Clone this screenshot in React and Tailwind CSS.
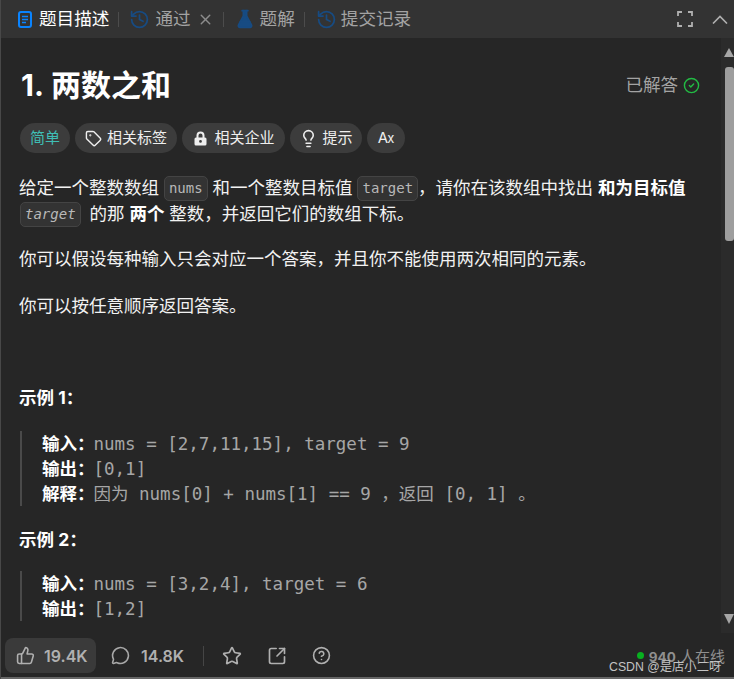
import React from "react";
import { ThumbsUp, MessageCircle, Star, SquareArrowOutUpRight, CircleHelp, Tag, Lightbulb, X, History, FlaskConical, CircleCheck } from "lucide-react";

const SANS = "font-['Inter','Noto_Sans_CJK_SC',sans-serif]";

function Sep() {
  return <span className="w-px h-[15px] bg-[#4c4c4c] mx-[9px]" />;
}

function Pill({ children, className = "" }) {
  return (
    <span className={`h-[30px] rounded-full bg-[#3c3c3c] flex items-center justify-center text-[15px] ${className}`}>
      {children}
    </span>
  );
}

function Code({ children, italic, className = "" }) {
  return (
    <code className={`inline-block h-[25px] leading-[22px] rounded-[5px] border border-[#444444] bg-[#333333] px-[4px] text-[14px] text-[#b8b8b8] font-['DejaVu_Sans_Mono',monospace] align-[1px] ${italic ? "italic" : ""} ${className}`}>
      {children}
    </code>
  );
}

function Mono({ children }) {
  return <span className="-ml-px font-['DejaVu_Sans_Mono','Noto_Sans_CJK_SC',monospace] text-[#a6a6a6]">{children}</span>;
}

function Label({ children }) {
  return <strong className="font-bold text-white text-[17.5px]">{children}</strong>;
}

export default function App() {
  return (
    <div className={`relative w-[734px] h-[679px] overflow-hidden bg-[#262626] border-l border-[#484848] flex flex-col ${SANS}`}>
      {/* tab bar */}
      <div className="h-[38px] shrink-0 bg-[#333333] flex items-center pl-[17px] pr-[6px] text-[17.6px]">
        <svg width="14" height="17" viewBox="0 0 14 17" fill="none" stroke="#0a84ff" strokeWidth="2">
          <rect x="1" y="1" width="12" height="15" rx="2" />
          <path d="M4 5.5H10M4 8.5H10M4 11.5H8" strokeWidth="1.5" />
        </svg>
        <span className="ml-[7px] text-white">题目描述</span>
        <Sep />
        <History size={21} className="ml-[1px] text-[#174b82]" />
        <span className="ml-[5px] text-[#a3a3a3]">通过</span>
        <X size={17} className="ml-[6px] text-[#8c8c8c]" />
        <Sep />
        <FlaskConical size={20} fill="#174b82" className="ml-[2px] text-[#174b82]" />
        <span className="ml-[5px] text-[#a3a3a3]">题解</span>
        <Sep />
        <History size={21} className="ml-[2px] text-[#174b82]" />
        <span className="ml-[4px] text-[#a3a3a3]">提交记录</span>
        <svg className="ml-auto" width="16" height="16" viewBox="0 0 16 16" fill="none" stroke="#b0b0b0" strokeWidth="1.8">
          <path d="M1 5V1H5M11 1H15V5M15 11V15H11M5 15H1V11" />
        </svg>
        <svg className="ml-[19px]" width="16" height="9" viewBox="0 0 16 9" fill="none" stroke="#b0b0b0" strokeWidth="1.6">
          <path d="M1 8.5L8 1.5L15 8.5" />
        </svg>
      </div>

      <div className="flex-1 flex min-h-0">
        {/* content */}
        <div className="flex-1 min-w-0 pl-[18px] pr-[20px] overflow-hidden">
          <div className="flex items-center justify-between mt-[28px] h-[38px]">
            <h1 className="text-[30px] font-bold text-white pl-[2px] leading-none">1.<span className="ml-[7px]">两数之和</span></h1>
            <span className="flex items-center text-[17.5px] text-[#a3a3a3] mr-[1px]">
              已解答
              <CircleCheck size={17} strokeWidth={2} className="ml-[5px] text-[#22bb44]" />
            </span>
          </div>

          <div className="flex gap-[5px] mt-[19px] ml-px text-[#eeeeee]">
            <Pill className="w-[50px] text-[#3fbfb5]">简单</Pill>
            <Pill className="w-[102px] gap-[5px]"><Tag size={17} />相关标签</Pill>
            <Pill className="w-[103px] gap-[7px] pl-[2px]">
              <svg width="13" height="15" viewBox="0 0 13 15">
                <path d="M3.5 7V4.5a3 3 0 0 1 6 0V7" fill="none" stroke="#eeeeee" strokeWidth="2" />
                <path fillRule="evenodd" d="M2 6.5H11a1.5 1.5 0 0 1 1.5 1.5V13a1.5 1.5 0 0 1-1.5 1.5H2A1.5 1.5 0 0 1 .5 13V8A1.5 1.5 0 0 1 2 6.5ZM6.5 9a1.4 1.4 0 1 0 0 2.8a1.4 1.4 0 0 0 0-2.8Z" fill="#eeeeee" />
              </svg>
              相关企业
            </Pill>
            <Pill className="w-[72px] gap-[4px]"><Lightbulb size={19} />提示</Pill>
            <Pill className="w-[38px] text-[14px]"><span>A</span><span className="text-[13px] -ml-[1px] mt-[1px]">x</span></Pill>
          </div>

          <div className="mt-[22px] text-[17.5px] leading-[26px] text-[#f2f2f2]">
            <p>
              给定一个整数数组 <Code>nums</Code> 和一个整数目标值 <Code>target</Code>，请你在该数组中找出 <strong className="font-bold text-white">和为目标值</strong>
              <br />
              <Code italic className="mr-[4px] ml-px">target</Code> 的那 <strong className="font-bold text-white">两个</strong> 整数，并返回它们的数组下标。
            </p>
            <p className="mt-[19px]">你可以假设每种输入只会对应一个答案，并且你不能使用两次相同的元素。</p>
            <p className="mt-[21px]">你可以按任意顺序返回答案。</p>
            <p className="mt-[66px]"><Label>示例 1：</Label></p>

            <blockquote className="mt-[20px] border-l-2 border-[#4a4a4a] pl-[20px] ml-[1px] leading-[25px]">
              <div className="h-[25px]"><Label>输入：</Label><Mono>nums = [2,7,11,15], target = 9</Mono></div>
              <div className="h-[25px]"><Label>输出：</Label><Mono>[0,1]</Mono></div>
              <div className="h-[25px]"><Label>解释：</Label><Mono>因为 nums[0] + nums[1] == 9 ，返回 [0, 1] 。</Mono></div>
            </blockquote>

            <p className="mt-[21px]"><Label>示例 2：</Label></p>
            <blockquote className="mt-[18px] border-l-2 border-[#4a4a4a] pl-[20px] ml-[1px] leading-[25px]">
              <div className="h-[25px]"><Label>输入：</Label><Mono>nums = [3,2,4], target = 6</Mono></div>
              <div className="h-[25px]"><Label>输出：</Label><Mono>[1,2]</Mono></div>
            </blockquote>
          </div>
        </div>

        {/* scrollbar */}
        <div className="w-[13px] shrink-0 bg-[#2b2b2b] flex flex-col items-end justify-between pt-[10px] pb-[9px]">
          <div className="flex flex-col items-end w-full">
            <svg width="10" height="9" viewBox="0 0 10 9"><path d="M5 0 L10 9 L0 9 Z" fill="#a6a6a6" /></svg>
            <div className="w-[9px] h-[174px] mt-[10px] rounded-[3px] bg-[#9e9e9e]" />
          </div>
          <svg width="10" height="10" viewBox="0 0 10 10"><path d="M0 0 L10 0 L5 10 Z" fill="#a6a6a6" /></svg>
        </div>
      </div>

      {/* footer */}
      <div className="h-[46px] shrink-0 flex items-center pl-[4px] pr-[9px] pt-px border-b-2 border-[#666666]">
        <div className="w-[91px] h-[35px] rounded-[8px] bg-[#3a3a3a] flex items-center pl-[11px] text-[#b0b0b0]">
          <ThumbsUp size={19} />
          <span className="ml-[9px] text-[16px] font-semibold">19.4K</span>
        </div>
        <MessageCircle size={19} className="ml-[15px] text-[#a8a8a8]" />
        <span className="ml-[11px] text-[16px] font-semibold text-[#b0b0b0]">14.8K</span>
        <span className="w-px h-[20px] bg-[#454545] ml-[19px]" />
        <Star size={20} className="ml-[18px] text-[#b0b0b0]" />
        <SquareArrowOutUpRight size={20} className="ml-[25px] text-[#b0b0b0]" />
        <CircleHelp size={19} className="ml-[25px] text-[#b0b0b0]" />
        <span className="ml-auto flex items-center text-[15px] text-[#8f8f8f] mt-[3px]">
          <span className="w-[7px] h-[7px] rounded-full bg-[#08b020] mr-[5px] -mt-[4px]" />
          <span className="font-bold text-[13.5px]">940</span>&nbsp;人在线
        </span>
      </div>

      {/* watermark */}
      <span className="absolute left-[608px] top-[658px] text-[12.3px] leading-[18px] text-[#c4c4c4] whitespace-nowrap font-['Liberation_Sans','Noto_Sans_CJK_SC',sans-serif]">CSDN @是店小二呀</span>
    </div>
  );
}
